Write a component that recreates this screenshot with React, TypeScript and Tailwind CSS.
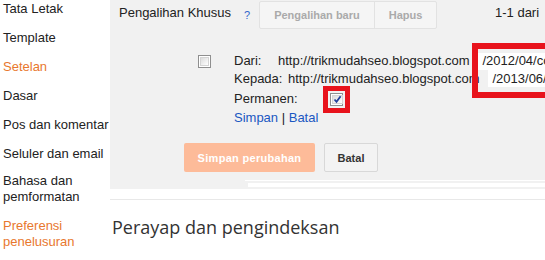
import React from "react";

function Box({ checked }: { checked?: boolean }) {
  return (
    <span className="inline-flex w-[13px] h-[13px] border border-[#8f8f8f] bg-white p-[1px]">
      <span className="flex-1 border border-[#d4d4d4] bg-gradient-to-br from-[#dcdcdc] to-[#ffffff] flex items-center justify-center">
        {checked && (
          <svg width="9" height="9" viewBox="0 0 9 9">
            <path d="M1.5 4.5 L3.5 6.8 L7.6 1.2" stroke="#23419b" strokeWidth="1.8" fill="none" />
          </svg>
        )}
      </span>
    </span>
  );
}

const side = [
  { t: "Tata Letak", c: "text-[#222]" },
  { t: "Template", c: "text-[#222]" },
  { t: "Setelan", c: "text-[#e8772e]" },
  { t: "Dasar", c: "text-[#222]" },
  { t: "Pos dan komentar", c: "text-[#222]" },
  { t: "Seluler dan email", c: "text-[#222]" },
];

export default function App() {
  return (
    <div className="w-[545px] h-[260px] bg-white flex overflow-hidden font-['Liberation_Sans',Arial,sans-serif] text-[13px] leading-[16px]">
      <div className="w-[110px] shrink-0 pl-[3px] pt-[1px] flex flex-col overflow-hidden">
        {side.map((s) => (
          <div key={s.t} className={`${s.c} h-[29px] whitespace-nowrap`}>{s.t}</div>
        ))}
        <div className="text-[#222] h-[45px] -mt-[2px]">Bahasa dan<br />pemformatan</div>
        <div className="text-[#e8772e]">Preferensi<br />penelusuran</div>
      </div>
      <div className="flex-1 flex flex-col min-w-0">
        <div className="bg-[#f1f1f1] h-[189px] relative overflow-hidden flex flex-col">
          <div className="flex items-start pt-[1px] h-[29px]">
            <div className="ml-[9px] mt-[4px] text-[#222] whitespace-nowrap">Pengalihan Khusus</div>
            <div className="ml-[13px] mt-[6px] text-[11px] text-[#3366cc]">?</div>
            <div className="ml-[9px] flex h-[28px] border border-[#e2e2e2] rounded-[2px] bg-[#f5f5f5] text-[11px] font-bold text-[#aaaaaa]">
              <div className="px-[14px] flex items-center border-r border-[#e2e2e2] whitespace-nowrap">Pengalihan baru</div>
              <div className="px-[14px] flex items-center">Hapus</div>
            </div>
            <div className="ml-auto mt-[4px] text-[#222] whitespace-nowrap w-[50px]">1-1 dari</div>
          </div>
          <div className="flex pl-[88px] mt-[22px]">
            <div className="mt-[3px]"><Box /></div>
            <div className="ml-[23px] flex flex-col text-[#222] whitespace-nowrap">
              <div className="flex items-center h-[18px] mt-[1px]">
                <span className="w-[44px]">Dari:</span>
                <span>http://trikmudahseo.blogspot.com</span>
                <span className="ml-[8px] bg-white h-[17px] px-[5px] flex items-center">/2012/04/contoh</span>
              </div>
              <div className="flex items-center h-[17px]">
                <span className="w-[54px]">Kepada:</span>
                <span>http://trikmudahseo.blogspot.com</span>
                <span className="ml-[8px] bg-white h-[17px] px-[5px] flex items-center">/2013/06/contoh</span>
              </div>
              <div className="flex items-center h-[22px] mt-[1px]">
                <span className="w-[96px]">Permanen:</span>
                <span className="relative inline-flex">
                  <Box checked />
                  <span className="absolute -left-[7px] -top-[7px] w-[27px] h-[27px] border-[5px] border-[#e8131c]"></span>
                </span>
              </div>
              <div className="text-[#1a57c2] h-[17px]">
                Simpan <span className="text-[#222]">|</span> Batal
              </div>
            </div>
          </div>
          <div className="flex pl-[74px] mt-[16px] gap-[9px] text-[11px] font-bold">
            <div className="h-[29px] w-[131px] rounded-[2px] bg-[#fdbb99] text-white flex items-center justify-center tracking-[0.3px]">Simpan perubahan</div>
            <div className="h-[29px] w-[54px] rounded-[2px] bg-[#f3f3f3] border border-[#d8d8d8] text-[#333] flex items-center justify-center">Batal</div>
          </div>
          <div className="ml-[135px] mt-[8px] h-[7px] border-t border-white flex items-end">
            <div className="flex-1 ml-[3px] h-[4px] bg-white"></div>
          </div>
          <div className="absolute left-[362px] top-[43px] w-[90px] h-[55px] border-[6px] border-[#e8131c]"></div>
        </div>
        <div className="mt-[10px] border-t border-[#e8e8e8]"></div>
        <div className="ml-[2px] mt-[15px] font-['Open_Sans',sans-serif] text-[18px] leading-[24px] text-[#333]">Perayap dan pengindeksan</div>
      </div>
    </div>
  );
}
